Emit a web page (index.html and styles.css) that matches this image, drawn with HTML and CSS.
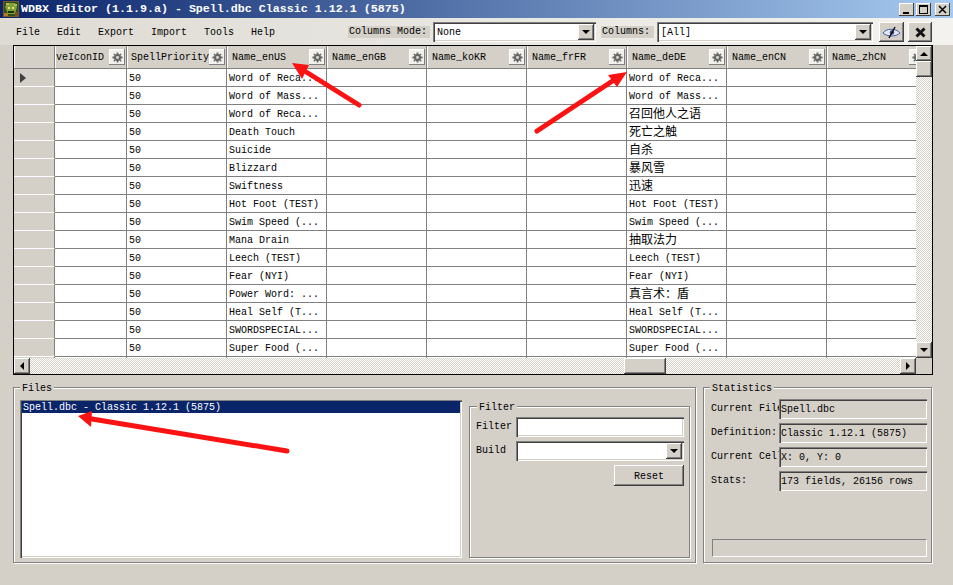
FILE: index.html
```html
<!DOCTYPE html>
<html lang="en">
<head>
    <meta charset="UTF-8">
    <meta name="viewport" content="width=device-width, initial-scale=1.0">
    <title>WDBX Editor</title>
    <link rel="stylesheet" href="styles.css">
</head>
<body>
    <svg class="defs" width="0" height="0">
        <symbol id="gear" viewBox="0 0 12 12">
            <path d="M5 0.500h2v1.700l1.200.5 1.300-1.200 1 1-1.200 1.300.5 1.200h1.700v2h-1.700l-.5 1.200 1.200 1.300-1 1-1.300-1.200-1.200.5v1.700h-2V9.800l-1.200-.5-1.300 1.200-1-1 1.200-1.300-.5-1.200H.5V5h1.700l.5-1.200L1.500 2.500l1-1 1.300 1.200L5 2.200z" fill="#666"/>
            <circle cx="6" cy="6" r="1.600" fill="#dcdad4"/>
        </symbol>
    </svg>

    <div id="wrapper">
        <div class="titlebar">
            <svg class="app-icon" width="16" height="16" viewBox="0 0 16 16">
                <rect width="16" height="16" fill="#7a5a20"/>
                <rect x="1" y="1" width="14" height="14" fill="#2f4f1c"/>
                <path d="M4 2h8l2 4-2 7H5L2 6z" fill="#7fa03a"/>
                <rect x="3" y="2" width="3" height="2" fill="#c9b060"/>
                <rect x="11" y="3" width="3" height="2" fill="#a8c050"/>
                <rect x="5" y="6" width="2" height="2" fill="#e8e070"/>
                <rect x="9" y="6" width="2" height="2" fill="#e8e070"/>
                <rect x="5" y="10" width="6" height="2" fill="#20300f"/>
                <rect x="1" y="12" width="4" height="3" fill="#b87820"/>
                <rect x="12" y="11" width="3" height="4" fill="#805018"/>
            </svg>
            <span class="title-text">WDBX Editor (1.1.9.a) - Spell.dbc Classic 1.12.1 (5875)</span>
            <div class="win-btns">
                <div class="win-btn"><svg width="15" height="13"><rect x="4" y="9" width="6" height="2" fill="#000"/></svg></div>
                <div class="win-btn"><svg width="15" height="13"><path d="M3 2h9v9H3z M4 4v6h7V4z" fill="#000" fill-rule="evenodd"/></svg></div>
                <div class="win-btn win-close"><svg width="15" height="13"><path d="M4 3l7 7M11 3l-7 7" stroke="#000" stroke-width="1.500"/></svg></div>
            </div>
        </div>

        <div class="toolbar">
            <div class="menu">
                <span>File</span><span>Edit</span><span>Export</span><span>Import</span><span>Tools</span><span>Help</span>
            </div>
            <span class="tool-label">Columns Mode:</span>
            <div class="combo combo-mode"><span class="combo-text">None</span><span class="combo-btn"></span></div>
            <span class="tool-label tool-label2">Columns:</span>
            <div class="combo combo-cols"><span class="combo-text">[All]</span><span class="combo-btn"></span></div>
            <div class="tool-btn tool-eye">
                <svg width="21" height="13" viewBox="0 0 21 13">
                    <path d="M2 7c3-5 13-5 17 0-4 4-13 4-17 0z" fill="#e4e6f0" stroke="#3a5fb0"/>
                    <circle cx="11" cy="6.500" r="2.200" fill="#39407a"/>
                    <path d="M8 12l6-11" stroke="#111" stroke-width="1.500"/>
                </svg>
            </div>
            <div class="tool-btn tool-x">
                <svg width="13" height="13" viewBox="0 0 13 13">
                    <path d="M2.500 2.500l8 8M10.500 2.500l-8 8" stroke="#111" stroke-width="3"/>
                </svg>
            </div>
        </div>

        <div class="grid">
            <div class="grid-top">
                <div class="table-wrap">
                    <table class="data">
                        <colgroup>
                            <col class="c-head"><col class="c-icon"><col><col><col><col><col><col><col><col>
                        </colgroup>
                        <thead>
                            <tr>
                                <th class="row-head"></th>
                                <th><div class="th-in th-first"><span class="th-name">veIconID</span><span class="gear"><svg width="11" height="11"><use href="#gear"/></svg></span></div></th>
                                <th><div class="th-in"><span class="th-name">SpellPriority</span><span class="gear"><svg width="11" height="11"><use href="#gear"/></svg></span></div></th>
                                <th><div class="th-in"><span class="th-name">Name_enUS</span><span class="gear"><svg width="11" height="11"><use href="#gear"/></svg></span></div></th>
                                <th><div class="th-in"><span class="th-name">Name_enGB</span><span class="gear"><svg width="11" height="11"><use href="#gear"/></svg></span></div></th>
                                <th><div class="th-in"><span class="th-name">Name_koKR</span><span class="gear"><svg width="11" height="11"><use href="#gear"/></svg></span></div></th>
                                <th><div class="th-in"><span class="th-name">Name_frFR</span><span class="gear"><svg width="11" height="11"><use href="#gear"/></svg></span></div></th>
                                <th><div class="th-in"><span class="th-name">Name_deDE</span><span class="gear"><svg width="11" height="11"><use href="#gear"/></svg></span></div></th>
                                <th><div class="th-in"><span class="th-name">Name_enCN</span><span class="gear"><svg width="11" height="11"><use href="#gear"/></svg></span></div></th>
                                <th><div class="th-in"><span class="th-name">Name_zhCN</span><span class="gear"><svg width="11" height="11"><use href="#gear"/></svg></span></div></th>
                            </tr>
                        </thead>
                        <tbody>
                            <tr><td class="row-head"><span class="row-mark"></span></td><td></td><td>50</td><td>Word of Reca...</td><td></td><td></td><td></td><td>Word of Reca...</td><td></td><td></td></tr>
                            <tr><td class="row-head"></td><td></td><td>50</td><td>Word of Mass...</td><td></td><td></td><td></td><td>Word of Mass...</td><td></td><td></td></tr>
                            <tr><td class="row-head"></td><td></td><td>50</td><td>Word of Reca...</td><td></td><td></td><td></td><td class="cjk">召回他人之语</td><td></td><td></td></tr>
                            <tr><td class="row-head"></td><td></td><td>50</td><td>Death Touch</td><td></td><td></td><td></td><td class="cjk">死亡之触</td><td></td><td></td></tr>
                            <tr><td class="row-head"></td><td></td><td>50</td><td>Suicide</td><td></td><td></td><td></td><td class="cjk">自杀</td><td></td><td></td></tr>
                            <tr><td class="row-head"></td><td></td><td>50</td><td>Blizzard</td><td></td><td></td><td></td><td class="cjk">暴风雪</td><td></td><td></td></tr>
                            <tr><td class="row-head"></td><td></td><td>50</td><td>Swiftness</td><td></td><td></td><td></td><td class="cjk">迅速</td><td></td><td></td></tr>
                            <tr><td class="row-head"></td><td></td><td>50</td><td>Hot Foot (TEST)</td><td></td><td></td><td></td><td>Hot Foot (TEST)</td><td></td><td></td></tr>
                            <tr><td class="row-head"></td><td></td><td>50</td><td>Swim Speed (...</td><td></td><td></td><td></td><td>Swim Speed (...</td><td></td><td></td></tr>
                            <tr><td class="row-head"></td><td></td><td>50</td><td>Mana Drain</td><td></td><td></td><td></td><td class="cjk">抽取法力</td><td></td><td></td></tr>
                            <tr><td class="row-head"></td><td></td><td>50</td><td>Leech (TEST)</td><td></td><td></td><td></td><td>Leech (TEST)</td><td></td><td></td></tr>
                            <tr><td class="row-head"></td><td></td><td>50</td><td>Fear (NYI)</td><td></td><td></td><td></td><td>Fear (NYI)</td><td></td><td></td></tr>
                            <tr><td class="row-head"></td><td></td><td>50</td><td>Power Word: ...</td><td></td><td></td><td></td><td class="cjk">真言术：盾</td><td></td><td></td></tr>
                            <tr><td class="row-head"></td><td></td><td>50</td><td>Heal Self (T...</td><td></td><td></td><td></td><td>Heal Self (T...</td><td></td><td></td></tr>
                            <tr><td class="row-head"></td><td></td><td>50</td><td>SWORDSPECIAL...</td><td></td><td></td><td></td><td>SWORDSPECIAL...</td><td></td><td></td></tr>
                            <tr><td class="row-head"></td><td></td><td>50</td><td>Super Food (...</td><td></td><td></td><td></td><td>Super Food (...</td><td></td><td></td></tr>
                            <tr><td class="row-head"></td><td></td><td></td><td></td><td></td><td></td><td></td><td></td><td></td><td></td></tr>
                        </tbody>
                    </table>
                </div>
                <div class="vscroll">
                    <div class="sb-btn sb-btn-up"><span class="tri tri-up"></span></div>
                    <div class="sb-thumb-v"></div>
                    <div class="sb-track"></div>
                    <div class="sb-btn"><span class="tri tri-down"></span></div>
                </div>
            </div>
            <div class="hscroll">
                <div class="sb-btn"><span class="tri tri-left"></span></div>
                <div class="sb-track sb-track-left"></div>
                <div class="sb-thumb-h"></div>
                <div class="sb-track"></div>
                <div class="sb-btn"><span class="tri tri-right"></span></div>
                <div class="sb-corner"></div>
            </div>
        </div>

        <div class="bottom">
            <fieldset class="group group-files">
                <legend>Files</legend>
                <div class="files-in">
                    <div class="listbox"><div class="list-sel">Spell.dbc - Classic 1.12.1 (5875)</div></div>
                    <fieldset class="group group-filter">
                        <legend>Filter</legend>
                        <div class="filter-form">
                            <label>Filter</label>
                            <div class="field"></div>
                            <label>Build</label>
                            <div class="combo combo-build"><span class="combo-text"></span><span class="combo-btn"></span></div>
                            <div class="btn-reset">Reset</div>
                        </div>
                    </fieldset>
                </div>
            </fieldset>
            <fieldset class="group group-stats">
                <legend>Statistics</legend>
                <div class="stats-form">
                    <label>Current File</label><div class="stat-box">Spell.dbc</div>
                    <label>Definition:</label><div class="stat-box">Classic 1.12.1 (5875)</div>
                    <label>Current Cell</label><div class="stat-box">X: 0, Y: 0</div>
                    <label>Stats:</label><div class="stat-box">173 fields, 26156 rows</div>
                </div>
                <div class="progress"></div>
            </fieldset>
        </div>

        <!-- annotation arrows drawn over the window -->
        <svg class="arrows" width="953" height="585" viewBox="0 0 953 585">
            <g stroke="#fb1212" stroke-width="5" stroke-linecap="round" fill="none">
                <path d="M359 105L303 70"/>
                <path d="M537 131L614 80"/>
                <path d="M287 451L92 419"/>
            </g>
            <g fill="#fb1212">
                <path d="M292 63L309 65L302 79z"/>
                <path d="M627 72L617 87L608 75z"/>
                <path d="M78 416L92 411L91 427z"/>
            </g>
        </svg>
    </div>
</body>
</html>
```

FILE: styles.css
```css
*{
    box-sizing: border-box;
}
body{
    margin: 0;
    background-color: #d4d0c8;
    font-family: "Liberation Mono", "Noto Sans CJK SC", monospace;
    font-size: 10px;
    color: #000;
    overflow: hidden;
}
.defs{
    display: block;
    height: 0;
}
#wrapper{
    width: 953px;
    height: 585px;
    position: relative;
    overflow: hidden;
}

/* title bar */
.titlebar{
    height: 18px;
    display: flex;
    align-items: center;
    padding-left: 3px;
    background: linear-gradient(to right, #0a246a, #a6caf0);
}
.app-icon{
    flex: none;
}
.title-text{
    margin-left: 2px;
    font-size: 11.67px;
    font-weight: bold;
    color: #fff;
    white-space: nowrap;
}
.win-btns{
    margin-left: auto;
    display: flex;
    gap: 2px;
    padding-right: 3px;
}
.win-btn{
    width: 15px;
    height: 13px;
    background-color: #d4d0c8;
    box-shadow: inset -1px -1px #404040, inset 1px 1px #fff;
}
.win-btn svg{
    display: block;
}
.win-close{
    margin-left: 2px;
}

/* toolbar */
.toolbar{
    height: 27px;
    display: flex;
    align-items: center;
    padding: 1px 0 0 16px;
    background: linear-gradient(to right, #dedbd4, #f3f2ee);
}
.menu{
    width: 332px;
    flex: none;
    display: flex;
    gap: 17px;
}
.tool-label{
    height: 12px;
    line-height: 12px;
    width: 82px;
    padding-left: 1px;
    background-color: #d4d0c8;
}
.tool-label2{
    width: 53px;
    margin-left: 5px;
}
.combo{
    height: 20px;
    display: flex;
    align-items: center;
    background-color: #fff;
    box-shadow: inset 1px 1px #808080, inset 2px 2px #404040, inset -1px -1px #fff, inset -2px -2px #d4d0c8;
}
.combo-mode{
    width: 163px;
    margin-left: 3px;
}
.combo-cols{
    width: 216px;
    margin-left: 3px;
}
.combo-text{
    flex: 1;
    padding-left: 4px;
}
.combo-btn{
    width: 16px;
    height: 16px;
    margin-right: 2px;
    display: flex;
    align-items: center;
    justify-content: center;
    background-color: #d4d0c8;
    box-shadow: inset -1px -1px #404040, inset 1px 1px #fff, inset -2px -2px #808080;
}
.combo-btn::after{
    content: "";
    border-style: solid;
    border-width: 4px 4px 0 4px;
    border-color: #000 transparent transparent transparent;
}
.tool-btn{
    height: 20px;
    display: flex;
    align-items: center;
    justify-content: center;
    background-color: #d4d0c8;
    box-shadow: inset -1px -1px #404040, inset 1px 1px #fff, inset -2px -2px #808080;
}
.tool-eye{
    width: 25px;
    margin-left: 6px;
}
.tool-x{
    width: 24px;
    margin-left: 4px;
}

/* data grid */
.grid{
    width: 920px;
    height: 330px;
    margin-left: 13px;
    border: 1px solid #000;
    display: flex;
    flex-direction: column;
}
.grid-top{
    display: flex;
    height: 312px;
}
.table-wrap{
    width: 902px;
    overflow: hidden;
    background-color: #d4d0c8;
}
.data{
    width: 913px;
    table-layout: fixed;
    border-collapse: separate;
    border-spacing: 0;
}
.data col{
    width: 100px;
}
.data .c-head{
    width: 41px;
}
.data .c-icon{
    width: 72px;
}
.data th{
    height: 23px;
    padding: 0;
    font-weight: normal;
    text-align: left;
    background-color: #d4d0c8;
    border-right: 1px solid #808080;
    border-bottom: 1px solid #808080;
    box-shadow: inset 1px 0 #fff;
}
.data td{
    height: 18px;
    padding: 2px 0 0 2px;
    background-color: #fff;
    border-right: 1px solid #808080;
    border-bottom: 1px solid #808080;
    white-space: nowrap;
    overflow: hidden;
}
.data td.cjk{
    font-size: 12px;
    line-height: 14px;
}
.data td.row-head{
    padding: 1px 0 0;
    background-color: #d4d0c8;
    border-bottom: 1px solid #fff;
}
.row-mark{
    display: block;
    width: 0;
    margin-left: 6px;
    border-style: solid;
    border-width: 5px 0 5px 6px;
    border-color: transparent transparent transparent #404040;
}
.th-in{
    display: flex;
    align-items: center;
    justify-content: space-between;
    padding-left: 5px;
    padding-right: 1px;
}
.th-first{
    padding-left: 1px;
}
.th-name{
    white-space: nowrap;
}
.data th:nth-child(3) .th-in{
    padding-left: 4px;
}
.gear{
    flex: none;
    width: 16px;
    height: 16px;
    display: flex;
    align-items: center;
    justify-content: center;
    background-color: #f2f1ee;
    box-shadow: inset -1px -1px #808080, inset 1px 1px #fff;
}

/* scroll bars */
.vscroll{
    width: 16px;
    display: flex;
    flex-direction: column;
}
.hscroll{
    height: 16px;
    display: flex;
}
.sb-btn{
    width: 16px;
    height: 16px;
    flex: none;
    display: flex;
    align-items: center;
    justify-content: center;
    background-color: #d4d0c8;
    box-shadow: inset -1px -1px #404040, inset 1px 1px #fff, inset -2px -2px #808080;
}
.sb-btn-up{
    height: 15px;
}
.sb-track{
    flex: 1;
    background: conic-gradient(#d4d0c8 25%, #fff 0 50%, #d4d0c8 0 75%, #fff 0) 0 0 / 2px 2px;
}
.sb-track-left{
    flex: none;
    width: 594px;
}
.sb-thumb-v{
    height: 16px;
    flex: none;
    background-color: #d4d0c8;
    box-shadow: inset -1px -1px #404040, inset 1px 1px #fff, inset -2px -2px #808080;
}
.sb-thumb-h{
    width: 42px;
    flex: none;
    background-color: #d4d0c8;
    box-shadow: inset -1px -1px #404040, inset 1px 1px #fff, inset -2px -2px #808080;
}
.sb-corner{
    width: 16px;
    flex: none;
    background-color: #d4d0c8;
}
.tri{
    width: 0;
    height: 0;
    border-style: solid;
}
.tri-up{
    border-width: 0 4px 4px 4px;
    border-color: transparent transparent #000 transparent;
}
.tri-down{
    border-width: 4px 4px 0 4px;
    border-color: #000 transparent transparent transparent;
}
.tri-left{
    border-width: 4px 4px 4px 0;
    border-color: transparent #000 transparent transparent;
}
.tri-right{
    border-width: 4px 0 4px 4px;
    border-color: transparent transparent transparent #000;
}

/* bottom panels */
.bottom{
    display: flex;
    gap: 7px;
    margin: 6px 0 0 13px;
}
.group{
    margin: 0;
    padding: 0;
    min-width: 0;
    border: 1px solid #808080;
    box-shadow: inset 1px 1px #fff, 1px 1px #fff;
}
.group legend{
    height: 12px;
    line-height: 15px;
    margin-left: 6px;
    padding: 0 2px;
    background-color: #d4d0c8;
}
.group-files{
    width: 683px;
}
.files-in{
    display: flex;
    gap: 7px;
    padding: 7px 0 4px 6px;
}
.listbox{
    width: 442px;
    height: 158px;
    padding: 2px;
    background-color: #fff;
    box-shadow: inset 1px 1px #808080, inset 2px 2px #404040, inset -1px -1px #fff, inset -2px -2px #d4d0c8;
}
.list-sel{
    height: 12px;
    line-height: 14px;
    padding-left: 1px;
    margin-top: -1px;
    background-color: #0a246a;
    color: #fff;
}
.group-filter{
    width: 221px;
    height: 158px;
}
.group-filter legend{
    margin-left: 7px;
}
.filter-form{
    display: grid;
    grid-template-columns: 40px 168px;
    grid-auto-rows: 20px;
    row-gap: 4px;
    padding: 5px 0 0 6px;
}
.filter-form label{
    padding-top: 4px;
}
.field{
    background-color: #fff;
    box-shadow: inset 1px 1px #808080, inset 2px 2px #404040, inset -1px -1px #fff, inset -2px -2px #d4d0c8;
}
.btn-reset{
    grid-column: 2;
    justify-self: end;
    width: 70px;
    height: 21px;
    line-height: 23px;
    text-align: center;
    background-color: #d4d0c8;
    box-shadow: inset -1px -1px #404040, inset 1px 1px #fff, inset -2px -2px #808080;
}
.group-stats{
    width: 229px;
}
.stats-form{
    display: grid;
    grid-template-columns: 68px 148px;
    grid-auto-rows: 20px;
    row-gap: 4px;
    padding: 6px 0 0 7px;
}
.stats-form label{
    padding-top: 4px;
    white-space: nowrap;
    overflow: hidden;
}
.stat-box{
    padding: 5px 0 0 2px;
    box-shadow: inset 1px 1px #808080, inset 2px 2px #404040, inset -1px -1px #fff;
    white-space: nowrap;
}
.progress{
    width: 215px;
    height: 18px;
    margin: 48px 0 4px 8px;
    border: 1px solid;
    border-color: #808080 #fff #fff #808080;
}

/* annotation overlay */
.arrows{
    position: absolute;
    left: 0;
    top: 0;
    pointer-events: none;
}
```
